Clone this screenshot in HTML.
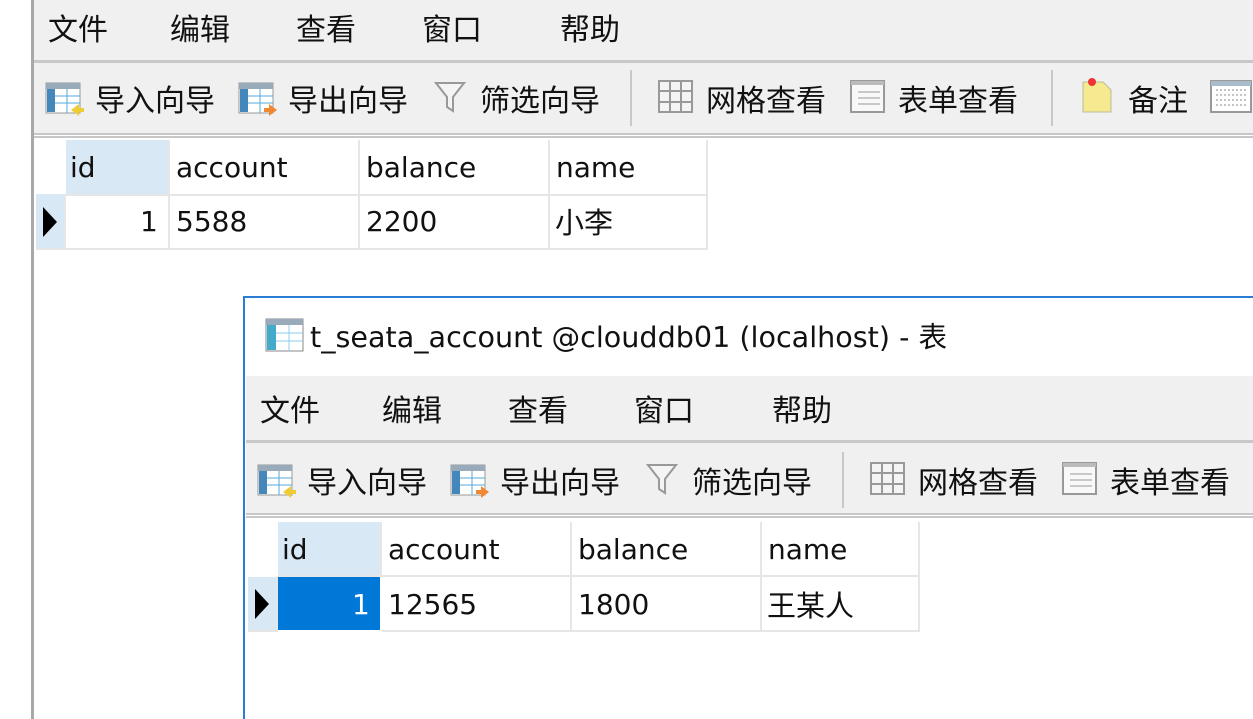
<!DOCTYPE html>
<html><head><meta charset="utf-8"><style>
*{margin:0;padding:0;box-sizing:border-box}
body{width:1253px;height:719px;background:#fff;position:relative;overflow:hidden;font-family:"Liberation Sans","Noto Sans CJK SC",sans-serif;color:#111}
.a{position:absolute;white-space:nowrap}
.m{font-size:30px;top:6px;font-family:"Noto Sans CJK SC",sans-serif;line-height:42px}
.t{font-size:30px;font-family:"Noto Sans CJK SC",sans-serif;line-height:42px}
.g{font-size:28px;font-family:"DejaVu Sans","Noto Sans CJK SC",sans-serif}
.k{font-size:29px;font-family:"Noto Sans CJK SC",sans-serif;line-height:40px}
.c{position:absolute;border-right:2px solid #e6e6e6;border-bottom:2px solid #e6e6e6}
</style></head><body>
<!-- outer window -->
<div class="a" style="left:31px;top:0;width:3px;height:719px;background:#a8a8a8"></div>
<div class="a" style="left:34px;top:0;width:1219px;height:60px;background:#f0f0f0"></div>
<div class="a" style="left:34px;top:60px;width:1219px;height:3px;background:#c8c8c8"></div>
<div class="a" style="left:34px;top:63px;width:1219px;height:70px;background:#f0f0f0"></div>
<div class="a" style="left:34px;top:133px;width:1219px;height:5px;background:#fff;border-top:2px solid #c8c8c8;border-bottom:2px solid #c8c8c8"></div>
<div class="a m" style="left:48px">文件</div>
<div class="a m" style="left:170px">编辑</div>
<div class="a m" style="left:296px">查看</div>
<div class="a m" style="left:422px">窗口</div>
<div class="a m" style="left:560px">帮助</div>

<svg class="a" style="left:45px;top:80px" width="40" height="36"><rect x="1" y="3" width="34" height="30" fill="#fff" stroke="#999"/><rect x="1" y="3" width="34" height="6" fill="#9ab"/><rect x="2" y="9" width="8" height="23" fill="#48b"/><path d="M10 16H35M10 23H35M22 9V33" stroke="#5ad"/><path d="M26 30l8-6v4h5v4h-5v4z" fill="#ec3"/></svg>
<div class="a t" style="left:95px;top:77px">导入向导</div>
<svg class="a" style="left:238px;top:80px" width="40" height="36"><rect x="1" y="3" width="34" height="30" fill="#fff" stroke="#999"/><rect x="1" y="3" width="34" height="6" fill="#9ab"/><rect x="2" y="9" width="8" height="23" fill="#48b"/><path d="M10 16H35M10 23H35M22 9V33" stroke="#5ad"/><path d="M39 30l-8-6v4h-5v4h5v4z" fill="#e83"/></svg>
<div class="a t" style="left:288px;top:77px">导出向导</div>
<svg class="a" style="left:434px;top:80px" width="32" height="34"><path d="M2 3H30L19 17V31L13 27V17Z" fill="#f4f4f4" stroke="#999" stroke-width="2"/></svg>
<div class="a t" style="left:480px;top:77px">筛选向导</div>
<div class="a" style="left:630px;top:70px;width:2px;height:56px;background:#c8c8c8"></div>
<svg class="a" style="left:658px;top:80px" width="36" height="34"><rect x="1" y="1" width="33" height="31" fill="#f4f4f4" stroke="#999" stroke-width="2"/><path d="M12 1V32M23 1V32M1 11H34M1 22H34" stroke="#999" stroke-width="2"/></svg>
<div class="a t" style="left:706px;top:77px">网格查看</div>
<svg class="a" style="left:850px;top:80px" width="36" height="34"><rect x="1" y="1" width="33" height="31" fill="#f8f8f8" stroke="#999" stroke-width="2"/><rect x="1" y="1" width="33" height="4" fill="#bbb"/><path d="M8 12H30M8 18H30M8 24H30" stroke="#999"/></svg>
<div class="a t" style="left:898px;top:77px">表单查看</div>
<div class="a" style="left:1051px;top:70px;width:2px;height:56px;background:#c8c8c8"></div>
<svg class="a" style="left:1080px;top:76px" width="34" height="38"><path d="M3 6H23L31 14V36H3Z" fill="#f5ea90" stroke="#bb9"/><circle cx="12" cy="6" r="4" fill="#e33"/></svg>
<div class="a t" style="left:1128px;top:77px">备注</div>
<svg class="a" style="left:1210px;top:80px" width="43" height="34"><rect x="1" y="1" width="40" height="31" fill="#fff" stroke="#999" stroke-width="2"/><rect x="1" y="1" width="40" height="5" fill="#abc"/><path d="M6 10H38M6 15H38M6 20H38M6 25H38" stroke="#888" stroke-dasharray="2 2"/></svg>

<!-- outer grid -->
<div class="c" style="left:36px;top:194px;width:30px;height:56px;background:#d9e8f5"></div>
<div class="a" style="left:43px;top:207px;width:0;height:0;border-left:14px solid #000;border-top:15px solid transparent;border-bottom:15px solid transparent"></div>
<div class="c" style="left:66px;top:140px;width:104px;height:56px;background:#d9e8f5"></div>
<div class="c" style="left:170px;top:140px;width:190px;height:56px"></div>
<div class="c" style="left:360px;top:140px;width:190px;height:56px"></div>
<div class="c" style="left:550px;top:140px;width:158px;height:56px"></div>
<div class="c" style="left:66px;top:196px;width:104px;height:54px"></div>
<div class="c" style="left:170px;top:196px;width:190px;height:54px"></div>
<div class="c" style="left:360px;top:196px;width:190px;height:54px"></div>
<div class="c" style="left:550px;top:196px;width:158px;height:54px"></div>
<div class="a g" style="left:70px;top:151px">id</div>
<div class="a g" style="left:176px;top:151px">account</div>
<div class="a g" style="left:366px;top:151px">balance</div>
<div class="a g" style="left:556px;top:151px">name</div>
<div class="a g" style="left:140px;top:205px">1</div>
<div class="a g" style="left:176px;top:205px">5588</div>
<div class="a g" style="left:366px;top:205px">2200</div>
<div class="a k" style="left:555px;top:201px">小李</div>

<!-- inner window -->
<div class="a" style="left:243px;top:296px;width:1010px;height:423px;background:#fff;border-left:2px solid #2b7cd3;border-top:2px solid #2b7cd3"></div>
<svg class="a" style="left:265px;top:318px" width="40" height="34"><rect x="1" y="1" width="37" height="32" fill="#fff" stroke="#888"/><rect x="1" y="1" width="37" height="6" fill="#9ab"/><rect x="2" y="7" width="9" height="25" fill="#4ac"/><path d="M11 15H38M11 23H38M24 7V33" stroke="#8ce"/></svg>
<div class="a" style="left:310px;top:315px;font-size:28.6px;font-family:'DejaVu Sans','Noto Sans CJK SC',sans-serif;color:#111">t_seata_account @clouddb01 (localhost) - 表</div>
<div class="a" style="left:246px;top:376px;width:1007px;height:64px;background:#f0f0f0"></div>
<div class="a" style="left:246px;top:440px;width:1007px;height:3px;background:#c8c8c8"></div>
<div class="a" style="left:246px;top:443px;width:1007px;height:70px;background:#f0f0f0"></div>
<div class="a" style="left:246px;top:513px;width:1007px;height:5px;background:#fff;border-top:2px solid #c8c8c8;border-bottom:2px solid #c8c8c8"></div>
<div class="a m" style="left:260px;top:387px">文件</div>
<div class="a m" style="left:382px;top:387px">编辑</div>
<div class="a m" style="left:508px;top:387px">查看</div>
<div class="a m" style="left:634px;top:387px">窗口</div>
<div class="a m" style="left:772px;top:387px">帮助</div>

<svg class="a" style="left:257px;top:462px" width="40" height="36"><rect x="1" y="3" width="34" height="30" fill="#fff" stroke="#999"/><rect x="1" y="3" width="34" height="6" fill="#9ab"/><rect x="2" y="9" width="8" height="23" fill="#48b"/><path d="M10 16H35M10 23H35M22 9V33" stroke="#5ad"/><path d="M26 30l8-6v4h5v4h-5v4z" fill="#ec3"/></svg>
<div class="a t" style="left:307px;top:459px">导入向导</div>
<svg class="a" style="left:450px;top:462px" width="40" height="36"><rect x="1" y="3" width="34" height="30" fill="#fff" stroke="#999"/><rect x="1" y="3" width="34" height="6" fill="#9ab"/><rect x="2" y="9" width="8" height="23" fill="#48b"/><path d="M10 16H35M10 23H35M22 9V33" stroke="#5ad"/><path d="M39 30l-8-6v4h-5v4h5v4z" fill="#e83"/></svg>
<div class="a t" style="left:500px;top:459px">导出向导</div>
<svg class="a" style="left:646px;top:462px" width="32" height="34"><path d="M2 3H30L19 17V31L13 27V17Z" fill="#f4f4f4" stroke="#999" stroke-width="2"/></svg>
<div class="a t" style="left:692px;top:459px">筛选向导</div>
<div class="a" style="left:842px;top:452px;width:2px;height:56px;background:#c8c8c8"></div>
<svg class="a" style="left:870px;top:462px" width="36" height="34"><rect x="1" y="1" width="33" height="31" fill="#f4f4f4" stroke="#999" stroke-width="2"/><path d="M12 1V32M23 1V32M1 11H34M1 22H34" stroke="#999" stroke-width="2"/></svg>
<div class="a t" style="left:918px;top:459px">网格查看</div>
<svg class="a" style="left:1062px;top:462px" width="36" height="34"><rect x="1" y="1" width="33" height="31" fill="#f8f8f8" stroke="#999" stroke-width="2"/><rect x="1" y="1" width="33" height="4" fill="#bbb"/><path d="M8 12H30M8 18H30M8 24H30" stroke="#999"/></svg>
<div class="a t" style="left:1110px;top:459px">表单查看</div>

<div class="c" style="left:248px;top:577px;width:30px;height:55px;background:#d9e8f5"></div>
<div class="a" style="left:255px;top:589px;width:0;height:0;border-left:14px solid #000;border-top:15px solid transparent;border-bottom:15px solid transparent"></div>
<div class="c" style="left:278px;top:522px;width:104px;height:55px;background:#d9e8f5"></div>
<div class="c" style="left:382px;top:522px;width:190px;height:55px"></div>
<div class="c" style="left:572px;top:522px;width:190px;height:55px"></div>
<div class="c" style="left:762px;top:522px;width:158px;height:55px"></div>
<div class="a" style="left:278px;top:577px;width:102px;height:53px;background:#0078d7"></div>
<div class="c" style="left:382px;top:577px;width:190px;height:55px"></div>
<div class="c" style="left:572px;top:577px;width:190px;height:55px"></div>
<div class="c" style="left:762px;top:577px;width:158px;height:55px"></div>
<div class="a g" style="left:282px;top:533px">id</div>
<div class="a g" style="left:388px;top:533px">account</div>
<div class="a g" style="left:578px;top:533px">balance</div>
<div class="a g" style="left:768px;top:533px">name</div>
<div class="a g" style="left:352px;top:588px;color:#fff">1</div>
<div class="a g" style="left:388px;top:588px">12565</div>
<div class="a g" style="left:578px;top:588px">1800</div>
<div class="a k" style="left:767px;top:584px">王某人</div>
</body></html>
